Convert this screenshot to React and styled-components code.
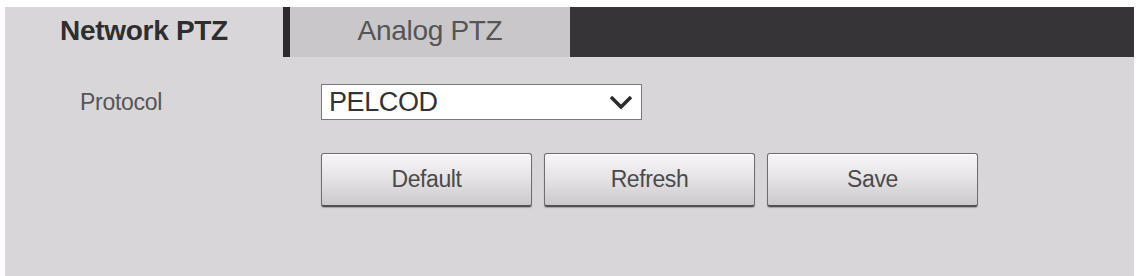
import React, { useState } from "react";
import styled, { createGlobalStyle } from "styled-components";

const GlobalStyle = createGlobalStyle`
  html, body {
    margin: 0;
    padding: 0;
    background: #ffffff;
    font-family: "Liberation Sans", Arial, sans-serif;
  }
`;

const Page = styled.div`
  width: 1137px;
  height: 276px;
  padding: 7px 3px 0 5px;
  box-sizing: border-box;
  overflow: hidden;
`;

const Panel = styled.div`
  background: #d9d6da;
  height: 100%;
  display: flex;
  flex-direction: column;
`;

const TabBar = styled.div`
  display: flex;
  height: 50px;
  background: #363437;
`;

const Tab = styled.div`
  width: ${props => props.width}px;
  display: flex;
  align-items: center;
  justify-content: center;
  padding-bottom: 3px;
  box-sizing: border-box;
  background: ${props => (props.active ? "#d9d6da" : "#c9c7ca")};
  color: ${props => (props.active ? "#2e2e2e" : "#555555")};
  font-size: 28px;
  font-weight: ${props => (props.active ? "bold" : "normal")};
  letter-spacing: -0.3px;
  cursor: pointer;
`;

const Divider = styled.div`
  width: 7px;
  background: #2c2b2d;
`;

const Form = styled.div`
  display: flex;
  flex-direction: column;
  padding: 27px 0 0 75px;
`;

const Row = styled.div`
  display: flex;
  align-items: center;
`;

const Label = styled.div`
  width: 241px;
  font-size: 23px;
  letter-spacing: -0.3px;
  color: #555555;
`;

const SelectBox = styled.div`
  position: relative;
  width: 321px;
  height: 36px;
  box-sizing: border-box;
  border: 1px solid #7a7a7a;
  background: #ffffff;
  display: flex;
  align-items: center;
  padding-left: 7px;
  font-size: 27px;
  letter-spacing: -0.4px;
  color: #333333;
`;

const Chevron = styled.svg`
  position: absolute;
  right: 7px;
  top: 8px;
`;

const ButtonRow = styled.div`
  display: flex;
  gap: 12px;
  margin: 33px 0 0 241px;
`;

const Button = styled.button`
  width: 211px;
  height: 54px;
  box-sizing: border-box;
  border: 1px solid #6e6e6e;
  border-bottom: 2px solid #505050;
  border-radius: 3px;
  background: linear-gradient(to bottom, #f7f5f7 0%, #e6e4e6 45%, #cbc9cb 100%);
  box-shadow: inset 0 1px 0 #ffffff, 0 1px 1px rgba(0, 0, 0, 0.25);
  font-family: "Liberation Sans", Arial, sans-serif;
  font-size: 23px;
  letter-spacing: -0.4px;
  color: #4a4a4a;
  cursor: pointer;
`;

export default function App() {
  const [tab, setTab] = useState("network");

  return (
    <>
      <GlobalStyle />
      <Page>
        <Panel>
          <TabBar>
            <Tab width={278} active={tab === "network"} onClick={() => setTab("network")}>
              Network PTZ
            </Tab>
            <Divider />
            <Tab width={280} active={tab === "analog"} onClick={() => setTab("analog")}>
              Analog PTZ
            </Tab>
          </TabBar>
          <Form>
            <Row>
              <Label>Protocol</Label>
              <SelectBox>
                PELCOD
                <Chevron width="26" height="18" viewBox="0 0 26 18">
                  <path d="M3 4 L13 14 L23 4" fill="none" stroke="#2a2a2a" strokeWidth="3.5" />
                </Chevron>
              </SelectBox>
            </Row>
            <ButtonRow>
              <Button>Default</Button>
              <Button>Refresh</Button>
              <Button>Save</Button>
            </ButtonRow>
          </Form>
        </Panel>
      </Page>
    </>
  );
}
